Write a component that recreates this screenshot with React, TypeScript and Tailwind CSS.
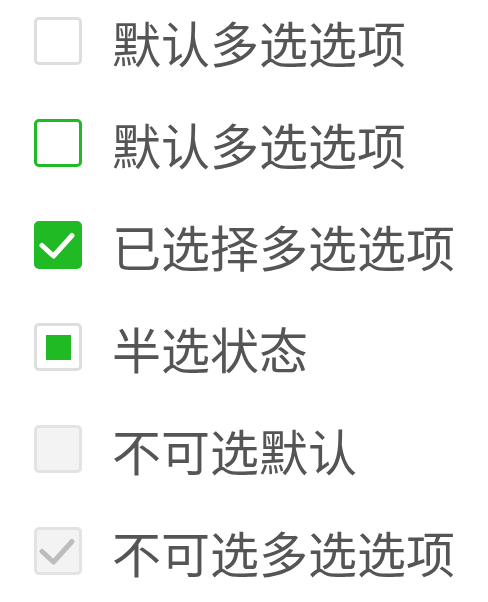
import React from "react";

type State = "default" | "focus" | "checked" | "half" | "disabled" | "disabledChecked";

const items: { label: string; state: State }[] = [
  { label: "默认多选选项", state: "default" },
  { label: "默认多选选项", state: "focus" },
  { label: "已选择多选选项", state: "checked" },
  { label: "半选状态", state: "half" },
  { label: "不可选默认", state: "disabled" },
  { label: "不可选多选选项", state: "disabledChecked" },
];

const Check = ({ color }: { color: string }) => (
  <svg width="48" height="48" viewBox="0 0 48 48" className="absolute -left-[3px] -top-[3px]">
    <path
      d="M8 24.5 L19.5 35 L38 14.5"
      fill="none"
      stroke={color}
      strokeWidth="5"
      strokeLinecap="round"
      strokeLinejoin="round"
    />
  </svg>
);

const Box = ({ state }: { state: State }) => {
  if (state === "checked") {
    return (
      <div className="relative w-12 h-12 rounded-[5px] bg-[#1fba24] border-[3px] border-[#1fba24]">
        <Check color="#ffffff" />
      </div>
    );
  }
  if (state === "focus") {
    return <div className="w-12 h-12 rounded-[5px] border-[3px] border-[#1fba24] bg-white" />;
  }
  if (state === "half") {
    return (
      <div className="w-12 h-12 rounded-[5px] border-[3px] border-[#dedede] bg-white flex items-center justify-center">
        <div className="w-[25px] h-[25px] bg-[#1fba24]" />
      </div>
    );
  }
  if (state === "disabled") {
    return <div className="w-12 h-12 rounded-[5px] border-[3px] border-[#e3e3e3] bg-[#f3f3f3]" />;
  }
  if (state === "disabledChecked") {
    return (
      <div className="relative w-12 h-12 rounded-[5px] border-[3px] border-[#e3e3e3] bg-[#f3f3f3]">
        <Check color="#bdbdbd" />
      </div>
    );
  }
  return <div className="w-12 h-12 rounded-[5px] border-[3px] border-[#dedede] bg-white" />;
};

export default function App() {
  return (
    <div
      className="w-[488px] h-[602px] bg-white overflow-hidden flex flex-col gap-[54px] pt-[17px] pl-[34px]"
      style={{ fontFamily: '"Noto Sans CJK SC", "Noto Sans", sans-serif' }}
    >
      {items.map((item, i) => (
        <div key={i} className="flex items-center h-12 gap-[30px]">
          <Box state={item.state} />
          <span className="text-[49px] leading-none text-[#555555] whitespace-nowrap">{item.label}</span>
        </div>
      ))}
    </div>
  );
}
